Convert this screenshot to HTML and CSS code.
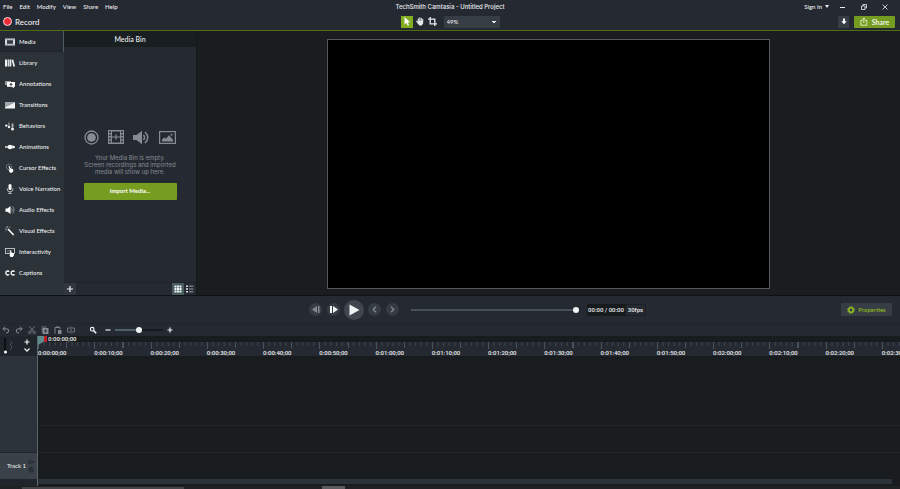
FILE: index.html
```html
<!DOCTYPE html>
<html lang="en">
<head>
<meta charset="utf-8">
<title>TechSmith Camtasia - Untitled Project</title>
<link rel="stylesheet" href="styles.css">
</head>
<body>
<div class="app">
  <header class="top">
    <div class="titlebar">
      <nav class="menu">
        <button>File</button><button>Edit</button><button>Modify</button><button>View</button><button>Share</button><button>Help</button>
      </nav>
      <h1 class="title">TechSmith Camtasia - Untitled Project</h1>
      <div class="window-controls">
        <button class="sign-in">Sign In <svg width="4" height="3" viewBox="0 0 4 3"><path d="M0 0h4L2 3z" fill="currentColor"/></svg></button>
        <button aria-label="Minimize"><svg width="6" height="6" viewBox="0 0 6 6"><path d="M0 3.5h5" stroke="currentColor"/></svg></button>
        <button aria-label="Restore"><svg width="6" height="6" viewBox="0 0 6 6" fill="none" stroke="currentColor" stroke-width=".8"><path d="M.5 2h3.500v3.500H.5zM2 2V.5h3.500V4H4"/></svg></button>
        <button aria-label="Close"><svg width="6" height="6" viewBox="0 0 6 6"><path d="M.5.5l5 5m0-5l-5 5" stroke="currentColor" stroke-width=".8"/></svg></button>
      </div>
    </div>
    <div class="toolbar">
      <button class="record"><span class="record-dot"></span>Record</button>
      <div class="tools">
        <button class="tool active" aria-label="Select"><svg width="8" height="9" viewBox="0 0 8 9"><path d="M1.500 0v7.500l2-1.700L4.700 8.800l1.300-.6L4.800 5.300h2.500z" fill="#fff"/></svg></button>
        <button class="tool" aria-label="Pan"><svg width="8" height="9" viewBox="0 0 8 9" fill="none" stroke="#e6e9ec" stroke-linecap="round"><path d="M2.300 4V1.700M3.800 4V.9M5.300 4V1.200M6.700 4.500V2.300M.7 4.200l1.500 2" stroke-width="1.100"/><path d="M1.800 4h5.300v2.200L5.800 8.500H3.300L1.800 6.500z" fill="#e6e9ec" stroke="none"/></svg></button>
        <button class="tool" aria-label="Crop"><svg width="9" height="9" viewBox="0 0 9 9" fill="none" stroke="#e6e9ec" stroke-width="1.300"><path d="M2.200 0v6.800H9M0 2.200h6.800V9"/></svg></button>
        <select class="zoom" aria-label="Canvas zoom"><option>49%</option></select>
      </div>
      <div class="sharing">
        <button class="download" aria-label="Download"><svg width="6" height="7" viewBox="0 0 6 7"><path d="M2 .5h2v2.700h1.700L3 6.300.3 3.200H2z" fill="#fff"/></svg></button>
        <button class="share"><svg width="8" height="9" viewBox="0 0 8 9" fill="none" stroke="#e4efcc" stroke-width=".9"><path d="M2.500 3.500H.8v4.700h6V3.500H5.200M3.800 6V1M2.200 2.500L3.800.9l1.600 1.600"/></svg>Share</button>
      </div>
    </div>
  </header>

  <main class="workspace">
    <nav class="sidebar">
      <button class="active"><svg viewBox="0 0 10 10"><path d="M0 1.500h10v7H0z" fill="#d8dcdf"/><path d="M2 3.200h6v3.600H2z" fill="#343d43"/><path d="M.5 2.500h9M.5 7.600h9" stroke="#50585d" stroke-width=".5" stroke-dasharray=".8"/></svg>Media</button>
      <button><svg viewBox="0 0 10 10" fill="#f1f3f4"><path d="M0 1.500h2v7H0zM2.600 1.500h1.300v7H2.600zM4.500 1.500h1.800v7H4.500zM6.600 1.900l1.600-.5L10 8.200l-1.600.5z"/></svg>Library</button>
      <button><svg viewBox="0 0 10 10"><path d="M0 2h6v4H0z" fill="#939b9f"/><path d="M2 3h8v4.700H8.800V9.500L7 7.700H2z" fill="#fff"/><path d="M6 4v2.800M4.600 5.400h2.800" stroke="#2c353b"/></svg>Annotations</button>
      <button><svg viewBox="0 0 10 10"><path d="M0 2h10v6.500H0z" fill="#f1f3f4"/><path d="M0 2h10L0 7z" fill="#a1a8ac"/><path d="M0 7l10-5" stroke="#687278" stroke-width=".5"/></svg>Transitions</button>
      <button><svg viewBox="0 0 10 10" fill="#eef0f1"><circle cx="1.300" cy="4.600" r="1.200"/><circle cx="4" cy="6" r="1.200"/><circle cx="7.500" cy="8" r="1.500"/><path d="M3.400 1.500h1v3.200h-1zM6.500 2.500h2v4h-2z" opacity=".65"/></svg>Behaviors</button>
      <button><svg viewBox="0 0 10 10"><path d="M0 5h10" stroke="#fff" stroke-width="1.300"/><circle cx="5" cy="5" r="2.300" fill="#fff"/><path d="M7.500 3l2.500 2-2.500 2z" fill="#fff"/></svg>Animations</button>
      <button><svg viewBox="0 0 10 10"><circle cx="4" cy="3.800" r="2.700" fill="none" stroke="#8d969b" stroke-dasharray="1.500 .7"/><path d="M3.500 3.200l1-.5 1 2.500 2.700 1v2.300l-1.400 1.300H5L3.600 7.300l1.200-.4z" fill="#fff"/></svg>Cursor Effects</button>
      <button><svg viewBox="0 0 10 10"><rect x="3.500" y="0" width="3" height="6" rx="1.500" fill="#fff"/><path d="M2.200 4.300v.8a2.800 2.800 0 0 0 5.600 0v-.8M5 8v1.700M3.200 9.600h3.600" fill="none" stroke="#d6dbdd" stroke-width=".8"/></svg>Voice Narration</button>
      <button><svg viewBox="0 0 10 10"><path d="M.5 3.500h2L5.500 1v8L2.500 6.700h-2z" fill="#fff"/><path d="M6.700 3.300q1.200 1.700 0 3.400M7.500 1.500q3.200 3.500 0 7" fill="none" stroke="#a3abaf" stroke-width=".8"/></svg>Audio Effects</button>
      <button><svg viewBox="0 0 10 10"><path d="M3 3l5.700 6" stroke="#fff" stroke-width="1.600"/><path d="M2.600 0v1.500M0 3h1.500M.7.800l1 1M5.300.7l-1 1M.8 5l.9-.8" stroke="#d6dbdd" stroke-width=".7"/></svg>Visual Effects</button>
      <button><svg viewBox="0 0 10 10"><rect x=".5" y="1.500" width="9" height="5" fill="none" stroke="#c4cacd" stroke-width=".9"/><path d="M2 3.500h5M2 5h3" stroke="#7d878d" stroke-width=".6"/><path d="M5 3.500l1 .1.500 2 2.400.9v2L7.700 10H5.500L4.200 7.600l1 .1z" fill="#fff"/></svg>Interactivity</button>
      <button><svg viewBox="0 0 10 10" fill="none" stroke="#fff" stroke-width="1.300"><path d="M4.300 3.600a2 2 0 1 0 0 2.800M9.600 3.600a2 2 0 1 0 0 2.800"/></svg>Captions</button>
    </nav>

    <section class="bin">
      <h2>Media Bin</h2>
      <div class="bin-body">
        <div class="bin-icons">
          <svg width="15" height="15" viewBox="0 0 15 15"><circle cx="7.500" cy="7.500" r="6.500" fill="none" stroke="#858b92" stroke-width="1.300"/><circle cx="7.500" cy="7.500" r="4.300" fill="#858b92"/></svg>
          <svg width="16" height="14" viewBox="0 0 16 14"><path d="M0 0h16v14H0z" fill="#858b92"/><path d="M4 1.500h8v11H4z" fill="#252a32"/><path d="M2 1.200v12M14 1.200v12" stroke="#252a32" stroke-width="1.700" stroke-dasharray="1.700 1.500"/><path d="M4 7h8M8 4.500v5" stroke="#858b92" stroke-width="1.200"/></svg>
          <svg width="17" height="15" viewBox="0 0 17 15"><path d="M0 5h3.500L9 .8v13.400L3.500 10H0z" fill="#858b92"/><path d="M10.500 5q2 2.500 0 5M12 2q5.500 5.500 0 11" fill="none" stroke="#858b92" stroke-width="1.500"/></svg>
          <svg width="17" height="13" viewBox="0 0 17 13"><rect x=".6" y=".6" width="15.800" height="11.800" fill="none" stroke="#858b92" stroke-width="1.200"/><path d="M3 10.500v-2l2.500-2 1.500 1.200 3-3.500 4 4.500v1.800z" fill="#858b92"/><circle cx="12.500" cy="3.700" r="1" fill="#858b92"/></svg>
        </div>
        <p>Your Media Bin is empty.<br>Screen recordings and imported<br>media will show up here.</p>
        <button class="import">Import Media...</button>
      </div>
      <div class="bin-foot">
        <button class="add" aria-label="Add media"><svg width="8" height="8" viewBox="0 0 8 8"><path d="M4 1v6M1 4h6" stroke="#eef0f1" stroke-width="1.200"/></svg></button>
        <button class="grid-view" aria-label="Grid view"><svg width="8" height="8" viewBox="0 0 8 8" fill="#f2f5f5"><path d="M.5.5h2v2h-2zM3 .5h2v2H3zM5.500.5h2v2h-2zM.5 3h2v2h-2zM3 3h2v2H3zM5.500 3h2v2h-2zM.5 5.500h2v2h-2zM3 5.500h2v2H3zM5.500 5.500h2v2h-2z"/></svg></button>
        <button class="list-view" aria-label="List view"><svg width="8" height="8" viewBox="0 0 8 8"><path d="M0 1.200h2M0 4h2M0 6.800h2" stroke="#d7dbde" stroke-width="1.500"/><path d="M3 1.200h4.500M3 4h4.500M3 6.800h4.500" stroke="#a7adb2" stroke-width=".9"/></svg></button>
      </div>
    </section>

    <section class="stage" aria-label="Canvas"><div class="canvas"></div></section>
  </main>

  <section class="playback">
    <div></div>
    <div class="transport">
      <button class="round dim" aria-label="Previous frame"><svg width="8" height="7" viewBox="0 0 8 7"><path d="M5 0v7L0 3.500zM6 0h1.500v7H6z" fill="currentColor"/></svg></button>
      <button class="round" aria-label="Next frame"><svg width="8" height="7" viewBox="0 0 8 7"><path d="M0 0h2v7H0zM3 0l5 3.500L3 7z" fill="currentColor"/></svg></button>
      <button class="round play" aria-label="Play"><svg width="12" height="12" viewBox="0 0 12 12"><path d="M1.500.5v11l10-5.500z" fill="currentColor"/></svg></button>
      <button class="round dim" aria-label="Previous marker"><svg width="5" height="7" viewBox="0 0 5 7"><path d="M4 .8L1.200 3.500 4 6.200" fill="none" stroke="currentColor" stroke-width="1.200"/></svg></button>
      <button class="round dim" aria-label="Next marker"><svg width="5" height="7" viewBox="0 0 5 7"><path d="M1 .8l2.800 2.700L1 6.200" fill="none" stroke="currentColor" stroke-width="1.200"/></svg></button>
      <input class="seek" type="range" min="0" max="100" value="100" aria-label="Playback position">
      <div class="readout"><span class="clock">00:00 / 00:00</span><span class="fps">30fps</span></div>
    </div>
    <button class="properties"><svg width="8" height="8" viewBox="0 0 8 8" fill="none" stroke="#93bd20"><circle cx="4" cy="4" r="2.200" stroke-width="1.600"/><circle cx="4" cy="4" r="3.400" stroke-dasharray="1.400 1.270"/></svg>Properties</button>
  </section>

  <section class="timeline">
    <div class="edit-bar">
      <button aria-label="Undo"><svg viewBox="0 0 8 8" fill="none" stroke="#8a9096"><path d="M3 .8L1 2.800l2 2M1 2.800h3.500q2.500.2 2.200 2.200Q6.500 7 4 7"/></svg></button>
      <button aria-label="Redo"><svg viewBox="0 0 8 8" fill="none" stroke="#8a9096"><path d="M5 .8l2 2-2 2M7 2.800H3.500Q1 3 1.300 5 1.500 7 4 7"/></svg></button>
      <button aria-label="Cut"><svg viewBox="0 0 8 8" fill="none" stroke="#7b8188" stroke-width=".9"><path d="M1.500.5l4 5M6.500.5l-4 5"/><circle cx="1.800" cy="6.400" r="1.200"/><circle cx="6.200" cy="6.400" r="1.200"/></svg></button>
      <button aria-label="Copy"><svg viewBox="0 0 8 8"><path d="M.5 0h5v2h-3v4h-2z" fill="#4b525a"/><path d="M1.500 2h6v6h-6z" fill="#858b91"/><path d="M4.500 3.300v3.400M2.800 5h3.400" stroke="#343b44"/></svg></button>
      <button aria-label="Paste"><svg viewBox="0 0 8 8"><path d="M1 7.500V1.500h5V3M2.500.7H4.500" fill="none" stroke="#7b8188"/><path d="M4 4h3.500v4H4z" fill="#858b91"/></svg></button>
      <button aria-label="Split"><svg viewBox="0 0 8 8" fill="none" stroke="#6d747b"><path d="M3 2H.5v4H3M5 2h2.500v4H5M4 .5v7"/></svg></button>
      <button class="magnify" aria-label="Zoom to fit"><svg viewBox="0 0 8 8" fill="none" stroke="#fff"><circle cx="3.200" cy="3.200" r="1.800" stroke-width="1.100"/><path d="M4.700 4.700l2.500 2.500" stroke-width="1.500"/></svg></button>
      <button aria-label="Zoom out"><svg viewBox="0 0 8 8"><path d="M1.500 4h5" stroke="#eef0f1" stroke-width="1.200"/></svg></button>
      <input class="scale" type="range" min="0" max="100" value="50" aria-label="Timeline zoom">
      <button aria-label="Zoom in"><svg viewBox="0 0 8 8"><path d="M1.500 4h5M4 1.500v5" stroke="#eef0f1" stroke-width="1.200"/></svg></button>
    </div>

    <div class="timeline-body">
      <div class="heads">
        <div class="head-tools">
          <svg width="14" height="19" viewBox="0 0 14 19"><path d="M4 2h2v12H4z" fill="#0b0e12"/><circle cx="5.500" cy="16" r="1.500" fill="#fff"/><path d="M10 5l2 2-2 2 2 2-2 3" fill="none" stroke="#4c545c" stroke-width=".9"/></svg>
          <div class="stack">
            <button aria-label="Add track"><svg width="6" height="6" viewBox="0 0 6 6"><path d="M3 .5v5M.5 3h5" stroke="#f1f3f4" stroke-width="1.200"/></svg></button>
            <button aria-label="Collapse tracks"><svg width="6" height="6" viewBox="0 0 6 6"><path d="M.5 1.500L3 4.200l2.500-2.700" fill="none" stroke="#f1f3f4" stroke-width="1.200"/></svg></button>
          </div>
        </div>
        <div class="head-empty"></div>
        <div class="head-track">Track 1
          <svg width="6" height="14" viewBox="0 0 6 14"><path d="M0 3q3-3 6 0-3 3-6 0" fill="none" stroke="#242b31"/><path d="M1 9.500h4V13H1zM2 9.500V8.300h2v1.200" fill="#2b3238" stroke="#242b31" stroke-width=".7"/></svg>
        </div>
        <div class="head-foot"></div>
      </div>
      <div class="tracks">
        <div class="now"><span class="flag"></span><span class="end"></span>0:00:00;00</div>
        <div class="ruler">
          <div class="ticks">
            <span>0:00:00;00</span><span>0:00:10;00</span><span>0:00:20;00</span><span>0:00:30;00</span><span>0:00:40;00</span><span>0:00:50;00</span><span>0:01:00;00</span><span>0:01:10;00</span><span>0:01:20;00</span><span>0:01:30;00</span><span>0:01:40;00</span><span>0:01:50;00</span><span>0:02:00;00</span><span>0:02:10;00</span><span>0:02:20;00</span><span>0:02:30;00</span>
          </div>
        </div>
        <div class="lane lane-open"></div>
        <div class="lane lane-spare"></div>
        <div class="lane lane-one"></div>
        <div class="scroll"></div>
      </div>
    </div>
    <div class="desktop-edge"><span class="edge-long"></span><span class="edge-short"></span></div>
  </section>
</div>
</body>
</html>
```

FILE: styles.css
```css
* { box-sizing: border-box; }

body {
  margin: 0;
  background: #171b1e;
  color: #eceeef;
  font: 500 6px/8px Lato, "Liberation Sans", sans-serif;
}

button, select {
  margin: 0;
  padding: 0;
  border: 0;
  background: none;
  color: inherit;
  font: inherit;
}

svg { display: block; flex: none; }
h1, h2, p { margin: 0; font: inherit; }

.app {
  display: flex;
  flex-direction: column;
  height: 100vh;
  overflow: hidden;
}

.top {
  background: #252a32;
  border-bottom: 1px solid #4e6c14;
}

.titlebar, .toolbar {
  display: grid;
  grid-template-columns: 1fr auto 1fr;
  align-items: center;
}

.titlebar { height: 13px; }
.menu { display: flex; gap: 7px; padding-left: 3px; }
.title { font-family: Inter, sans-serif; }

.window-controls {
  display: flex;
  justify-content: flex-end;
  align-items: center;
  gap: 15px;
  padding-right: 12px;
}

.sign-in { display: flex; align-items: center; gap: 3px; margin-right: -4px; }

.toolbar { height: 17px; }

.record {
  display: flex;
  align-items: center;
  gap: 3px;
  padding-left: 3px;
  font-size: 8px;
}

.record-dot {
  width: 9px;
  height: 9px;
  border: 1px solid #f6dcdc;
  border-radius: 50%;
  background: #ec2c36;
}

.tools { display: flex; gap: 1px; align-items: center; }

.tool {
  display: grid;
  place-items: center;
  width: 12px;
  height: 12px;
}

.tool.active { background: #83ad20; }

.zoom {
  width: 56px;
  height: 12px;
  margin-left: 4px;
  padding: 0 3px;
  appearance: none;
  border-radius: 1px;
  background: linear-gradient(#e3e6e8, #e3e6e8) right 5px center / 2px 2px no-repeat, linear-gradient(#e3e6e8, #e3e6e8) right 4px top 5px / 4px 1px no-repeat, #363d45;
}

.sharing { display: flex; justify-content: flex-end; gap: 5px; padding-right: 5px; }

.download {
  display: grid;
  place-items: center;
  width: 11px;
  height: 12px;
  background: #363d45;
}

.share {
  display: flex;
  align-items: center;
  justify-content: center;
  gap: 4px;
  width: 41px;
  height: 12px;
  border-radius: 1px;
  background: #739c20;
  color: #f0f5e4;
  font-size: 7px;
  font-weight: 700;
}

.workspace {
  display: flex;
  flex: 0 0 54.2%;
  min-height: 0;
  border-bottom: 1px solid #0e1114;
}

.sidebar {
  display: flex;
  flex-direction: column;
  width: 64px;
  background: #2b3238;
}

.sidebar button {
  display: flex;
  align-items: center;
  gap: 4px;
  height: 21px;
  padding-left: 5px;
  white-space: nowrap;
}

.sidebar button.active {
  background: #252a32;
  box-shadow: inset -1px 0 #4d5c61, inset 0 -1px #1e2429;
}

.sidebar svg { width: 10px; height: 10px; }

.bin {
  display: flex;
  flex-direction: column;
  width: 133px;
  border-right: 1px solid #14181b;
  background: #252a32;
}

.bin h2 {
  padding: 4px 0;
  background: #191e21;
  font-size: 7px;
  text-align: center;
}

.bin-body {
  display: flex;
  flex: 1;
  flex-direction: column;
  align-items: center;
  justify-content: center;
  color: #858b92;
}

.bin-icons { display: flex; align-items: center; gap: 9px; margin-bottom: 9px; }
.bin-body p { font: 400 6px/7px Inter, sans-serif; text-align: center; white-space: nowrap; }

.import {
  width: 93px;
  height: 17px;
  margin-top: 8px;
  border-radius: 1px;
  background: #769d20;
  color: #fff;
  font-weight: 700;
}

.bin-foot { display: flex; border-top: 1px solid #1f2429; }
.bin-foot button { display: grid; place-items: center; width: 12px; height: 12px; }
.bin-foot .add { margin-right: auto; background: #30373e; }
.bin-foot .grid-view { background: #485c60; }

.stage { display: flex; flex: 1; justify-content: center; background: #191d20; }

.canvas {
  width: 63%;
  margin: 8px 0 6px;
  border: 1px solid #55595b;
  background: #000;
}

.playback {
  display: grid;
  grid-template-columns: 1fr auto 1fr;
  align-items: center;
  height: 27px;
  background: #252a32;
}

.transport { display: flex; align-items: center; gap: 5px; padding-left: 55px; }

.round {
  display: grid;
  place-items: center;
  width: 13px;
  height: 13px;
  border-radius: 50%;
  background: #363c43;
  color: #eef2f3;
}

.round.dim { color: #858b90; }
.round.play { width: 20px; height: 20px; margin: 0 -1px; background: #40464d; }

input[type="range"] {
  height: 8px;
  margin: 0;
  appearance: none;
  background: linear-gradient(#455157, #455157) center / 100% 2px no-repeat;
}

input[type="range"]::-webkit-slider-thumb {
  width: 6px;
  height: 6px;
  appearance: none;
  border-radius: 50%;
  background: #f1f4f5;
}

.transport .seek { width: 168px; margin-left: 7px; }

.readout { display: flex; margin-left: 3px; line-height: 12px; text-align: center; white-space: nowrap; }
.clock { width: 38px; background: #171b1e; }
.fps { width: 21px; border: 1px solid #1b2024; line-height: 10px; }
.readout, .now, .ticks { font-family: Roboto, sans-serif; }

.properties {
  display: flex;
  align-items: center;
  justify-content: center;
  justify-self: end;
  gap: 3px;
  width: 51px;
  height: 13px;
  margin-right: 8px;
  border-radius: 1px;
  background: #363d45;
  color: #93bd20;
}

.timeline { display: flex; flex: 1; flex-direction: column; min-height: 0; }

.edit-bar {
  display: flex;
  align-items: center;
  gap: 5px;
  height: 13px;
  padding-left: 2px;
  border-top: 1px solid #20252b;
  background: #252a32;
}

.edit-bar svg { width: 8px; height: 8px; }
.edit-bar .magnify { margin: 0 2px 0 9px; }

.edit-bar .scale {
  width: 48px;
  margin: 0 -2px;
  background: linear-gradient(90deg, #4d6268 50%, #171b1e 50%) center / 100% 2px no-repeat;
}

.timeline-body { display: flex; flex: 1; min-height: 0; }
.heads { display: flex; flex-direction: column; width: 38px; border-right: 1px solid #5b666b; }
.head-tools { display: flex; justify-content: space-between; height: 20px; padding-right: 7px; background: #20252c; }
.stack { display: flex; flex-direction: column; justify-content: space-evenly; }
.head-empty { flex: 1; background: #2b3239; }

.head-track {
  display: flex;
  align-items: center;
  justify-content: space-between;
  height: 27px;
  padding: 0 3px 0 7px;
  border-top: 1px solid #20262c;
  background: #3a4148;
}

.head-foot { height: 7px; background: #20252c; }

.tracks { display: flex; flex: 1; flex-direction: column; min-width: 0; background: #181c1e; }
.now { display: flex; align-items: center; height: 6px; line-height: 6px; }

.flag {
  z-index: 1;
  align-self: flex-start;
  width: 6px;
  height: 9px;
  margin-bottom: -3px;
  background: #5d8b8b;
  clip-path: polygon(0 0, 100% 0, 100% 60%, 0 100%);
}

.end { width: 3px; height: 6px; margin-right: 1px; background: #bd1d25; }
.ruler { height: 14px; overflow: hidden; background: #252a32; }

.ticks {
  display: grid;
  grid-template-columns: repeat(16, 1fr);
  width: calc(100% + 38px);
  line-height: 7px;
}

.ticks span {
  height: 14px;
  padding-top: 7px;
  background:
    linear-gradient(90deg, #4b5258 1px, transparent 1px) 0 0 / 100% 7px no-repeat,
    linear-gradient(90deg, transparent 50%, #4b5258 50%, #4b5258 52%, transparent 52%) 0 0 / 100% 6px no-repeat,
    linear-gradient(90deg, #3f464d 1px, transparent 1px) 0 0 / 10% 4px repeat-x;
}

.lane { border-top: 1px solid #20262a; }
.lane-open { flex: 1; border-top: 0; }
.lane-spare { height: 27px; }
.lane-one { height: 27px; }
.scroll { height: 5px; margin: 0 8px 2px 0; background: #2b3239; }

.desktop-edge { display: flex; height: 3px; padding-left: 22px; background: #202122; }
.edge-long { width: 162px; margin: 1px 138px 0 0; background: #454647; }
.edge-short { width: 23px; background: #5a5b5c; }
```
